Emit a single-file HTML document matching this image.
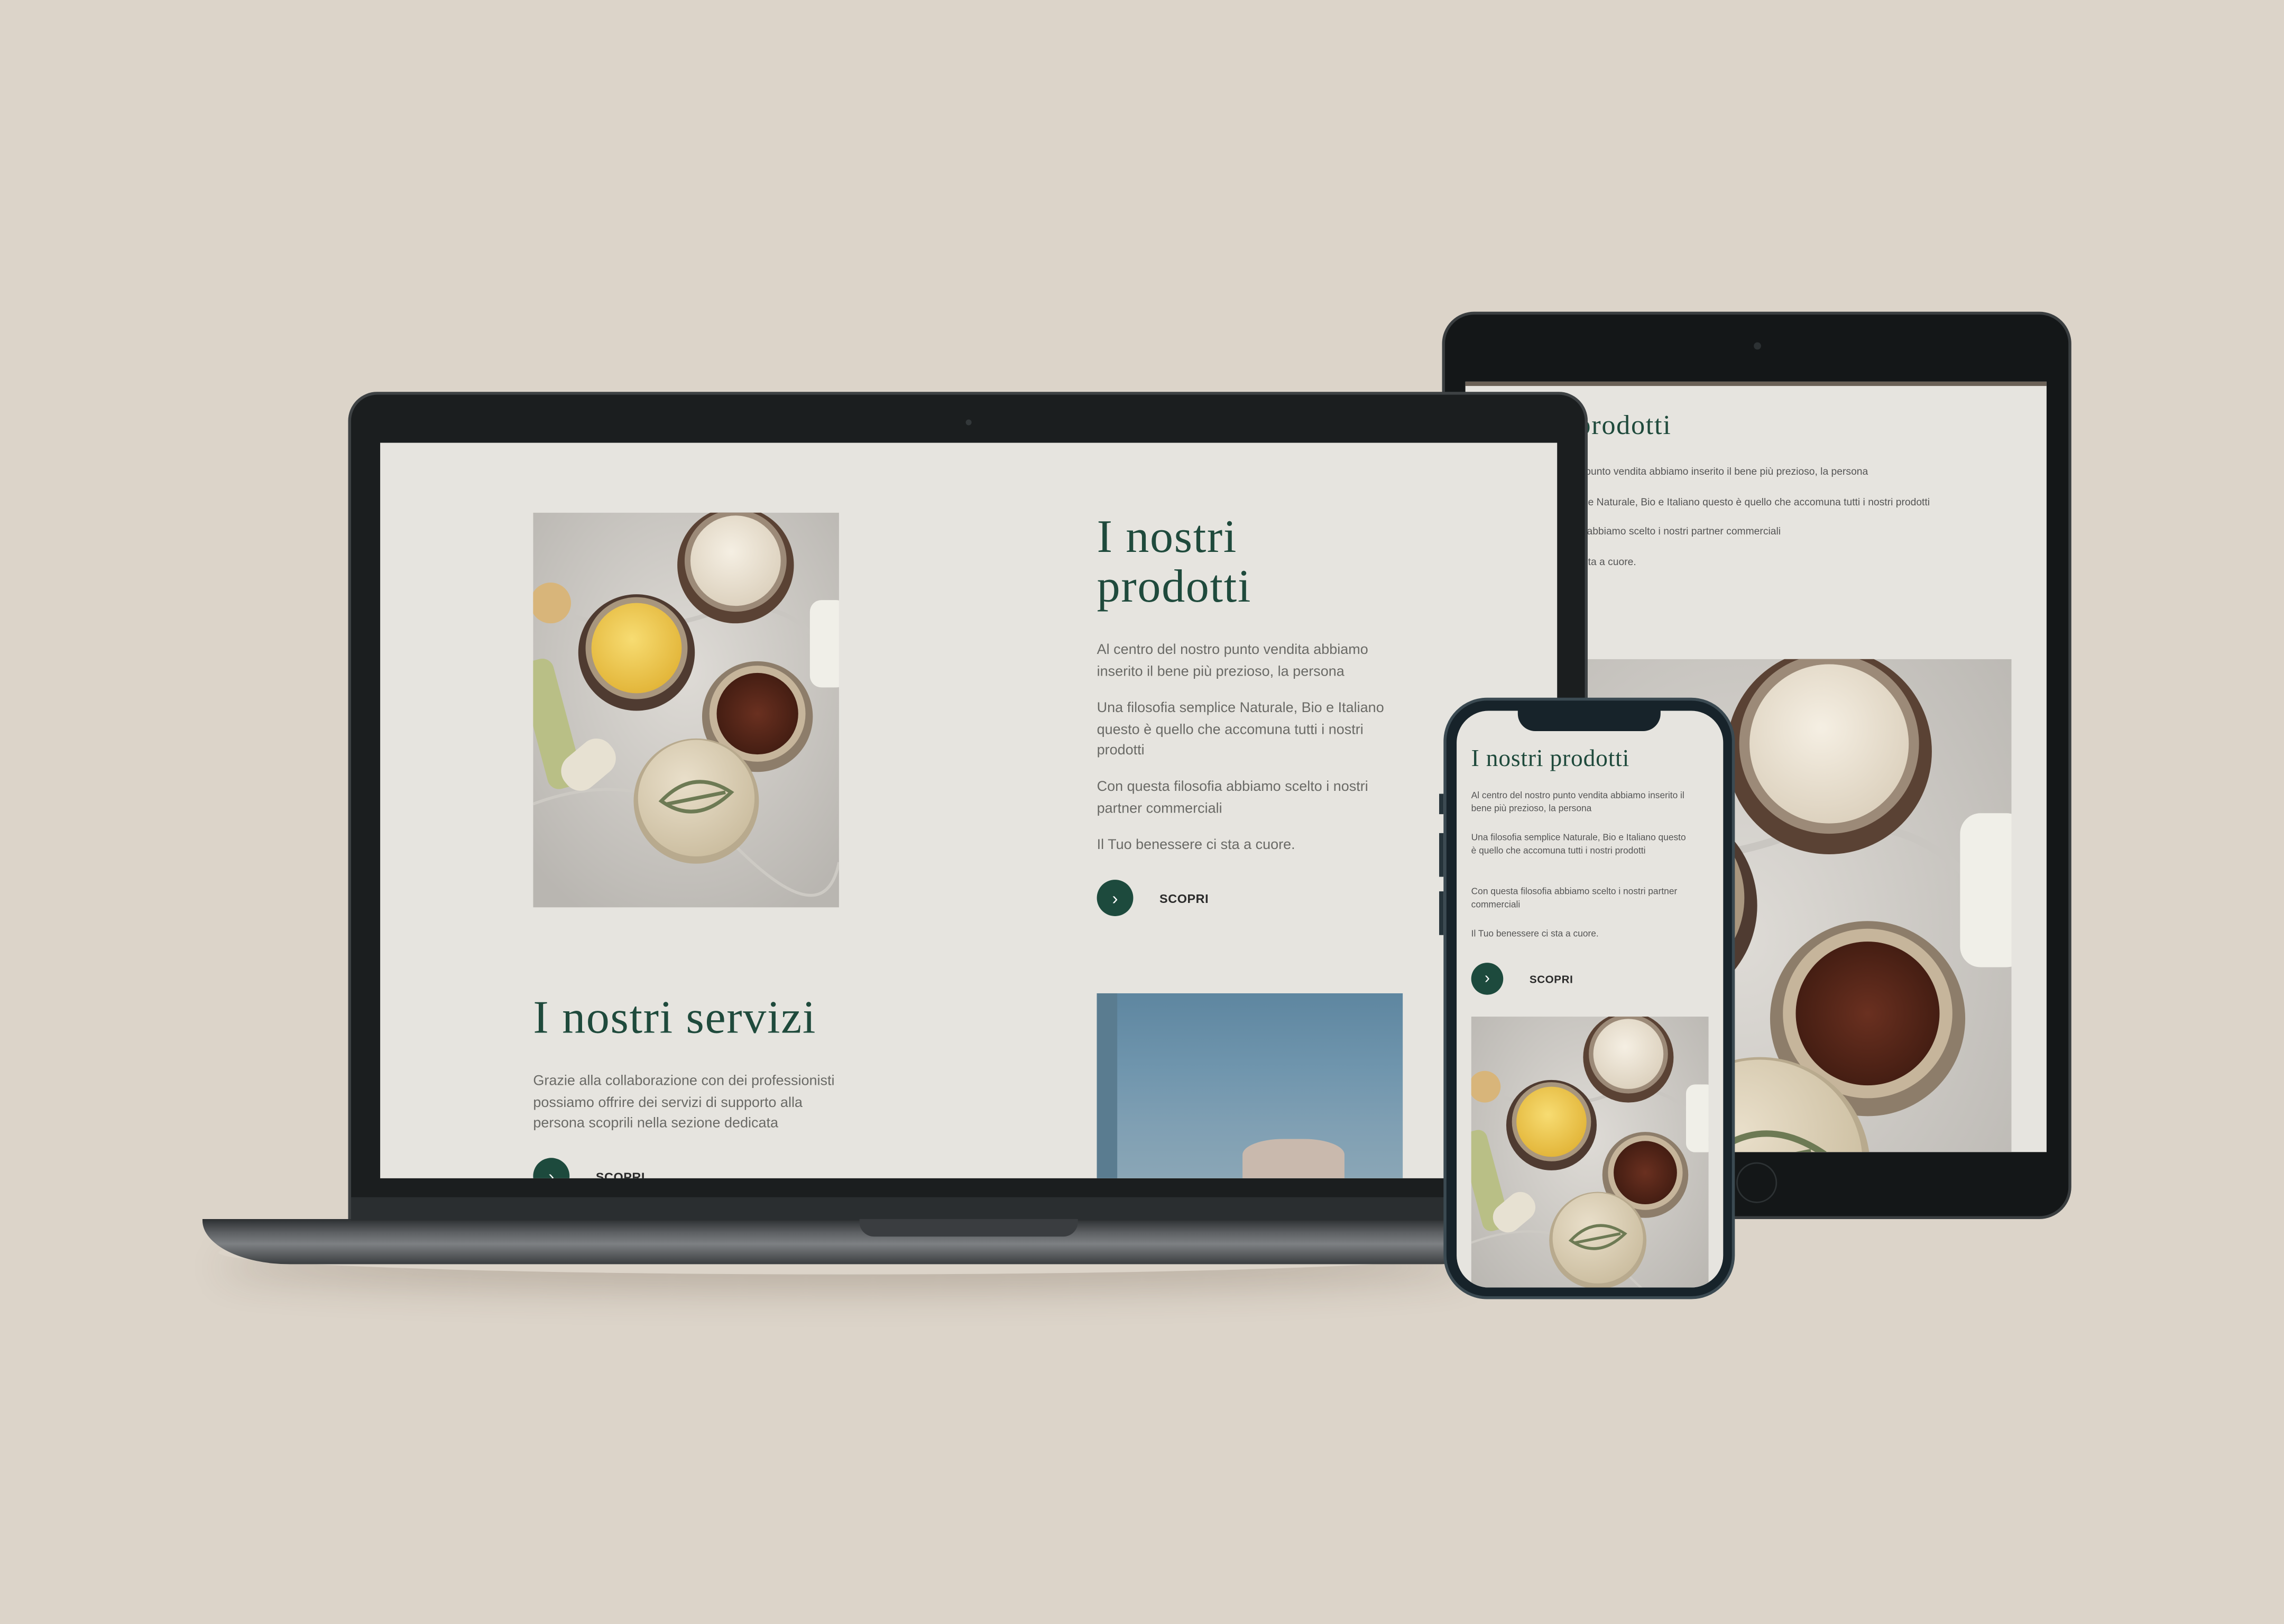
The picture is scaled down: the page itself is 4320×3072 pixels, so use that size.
<!DOCTYPE html>
<html><head><meta charset="utf-8"><style>
*{margin:0;padding:0;box-sizing:border-box}
html,body{width:4320px;height:3072px;overflow:hidden;background:#dcd4c9}
#s{position:absolute;left:0;top:0;width:1568px;height:1115px;transform:scale(2.7551);transform-origin:0 0;background:#dcd4c9;font-family:"Liberation Sans",sans-serif}
.a{position:absolute}
.h{font-family:"Liberation Serif",serif;color:#1f4a3c;font-weight:400;letter-spacing:.6px}
.p{color:#6a6a66;font-size:9.8px;line-height:14.6px}
.btn{position:absolute;border-radius:50%;background:#1d4a3d;color:#fff;display:flex;align-items:center;justify-content:center}
.sc{position:absolute;font-weight:bold;color:#2a2a2a;letter-spacing:.2px}
</style></head><body><div id="s">
<svg width="0" height="0" style="position:absolute">
<defs>
<radialGradient id="mb" cx="50%" cy="40%" r="70%"><stop offset="0" stop-color="#dedbd6"/><stop offset="1" stop-color="#b9b6b1"/></radialGradient>
<radialGradient id="cr" cx="45%" cy="40%" r="60%"><stop offset="0" stop-color="#f5efe3"/><stop offset="1" stop-color="#ddd2bf"/></radialGradient>
<radialGradient id="ye" cx="45%" cy="40%" r="60%"><stop offset="0" stop-color="#f7dc72"/><stop offset="1" stop-color="#e3b63a"/></radialGradient>
<radialGradient id="br" cx="50%" cy="50%" r="60%"><stop offset="0" stop-color="#6a3020"/><stop offset="1" stop-color="#3d1a10"/></radialGradient>
<radialGradient id="ld" cx="40%" cy="35%" r="70%"><stop offset="0" stop-color="#e9dfca"/><stop offset="1" stop-color="#cbbd9f"/></radialGradient>
<symbol id="ph" viewBox="0 0 210 271">
<rect width="210" height="271" fill="url(#mb)"/>
<path d="M0 60 Q60 90 120 70 T210 110" stroke="#c9c6c1" fill="none" stroke-width="3"/>
<path d="M0 200 Q80 170 140 230 T210 240" stroke="#cdcac4" fill="none" stroke-width="2"/>
<rect x="0" y="100" width="24" height="90" rx="8" fill="#b9bf86" transform="rotate(-15 12 145)"/>
<rect x="190" y="60" width="26" height="60" rx="8" fill="#f0efe8"/>
<circle cx="12" cy="62" r="14" fill="#d8b57a"/>
<circle cx="139" cy="36" r="40" fill="#5a4234"/>
<circle cx="139" cy="33" r="35" fill="#9c8a78"/>
<circle cx="139" cy="33" r="31" fill="url(#cr)"/>
<circle cx="71" cy="96" r="40" fill="#4f3b31"/>
<circle cx="71" cy="93" r="35" fill="#a8967e"/>
<circle cx="71" cy="93" r="31" fill="url(#ye)"/>
<circle cx="154" cy="140" r="38" fill="#8d7d6a"/>
<circle cx="154" cy="138" r="33" fill="#c6b59b"/>
<circle cx="154" cy="138" r="28" fill="url(#br)"/>
<rect x="18" y="160" width="40" height="26" rx="12" fill="#e7e1d2" transform="rotate(-40 38 173)"/>
<circle cx="112" cy="198" r="43" fill="#b8aa8e"/>
<circle cx="112" cy="196" r="40" fill="url(#ld)"/>
<path d="M88 198 Q110 175 136 192 Q112 215 88 198 Z M92 200 L132 192" stroke="#6d7a54" stroke-width="2.5" fill="none"/>
</symbol>
</defs></svg>

<!-- tablet -->
<div class="a" style="left:990px;top:214px;width:432px;height:623px;border-radius:22px;background:#141718;border:2px solid #3a3e40"></div>
<div class="a" style="left:1204px;top:235px;width:5px;height:5px;border-radius:50%;background:#2c3133"></div>
<div class="a" style="left:1192px;top:798px;width:28px;height:28px;border-radius:50%;border:1.5px solid #2d3234"></div>
<div class="a" style="left:1006px;top:262px;width:399px;height:529px;background:#e6e4df;overflow:hidden">
 <div class="a" style="left:0;top:0;width:399px;height:3px;background:#6b6157"></div>
 <div class="a h" style="left:12px;top:20px;font-size:19px">I nostri prodotti</div>
 <div class="a" style="left:20px;top:53px;font-size:7px;color:#555;line-height:20.5px;white-space:nowrap">
 Al centro del nostro punto vendita abbiamo inserito il bene più prezioso, la persona<br>
 Una filosofia semplice Naturale, Bio e Italiano questo è quello che accomuna tutti i nostri prodotti<br>
 Con questa filosofia abbiamo scelto i nostri partner commerciali<br>
 Il Tuo benessere ci sta a cuore.</div>
 <svg class="a" style="left:84px;top:180px" width="305" height="349" viewBox="45 -6 173 198" preserveAspectRatio="xMidYMid slice"><use href="#ph" x="0" y="0" width="210" height="271"/></svg>
</div>

<!-- laptop -->
<div class="a" style="left:150px;top:845px;width:860px;height:30px;border-radius:50%;box-shadow:0 10px 25px rgba(80,60,40,.25)"></div>
<div class="a" style="left:239px;top:269px;width:851px;height:570px;border-radius:20px 20px 0 0;background:#1b1e1f;border:2px solid #3e4244;border-bottom:none"></div>
<div class="a" style="left:663px;top:288px;width:4px;height:4px;border-radius:50%;background:#33383a"></div>
<div class="a" style="left:139px;top:837px;width:880px;height:31px;border-radius:0 0 30px 60px/0 0 20px 30px;background:linear-gradient(#2c2f31 0,#5d6063 30%,#7d8083 55%,#3b3e40 100%)"></div>
<div class="a" style="left:241px;top:822px;width:847px;height:16px;background:#2a2e30"></div>
<div class="a" style="left:590px;top:837px;width:150px;height:12px;border-radius:0 0 10px 10px;background:#3a3d40"></div>
<div class="a" style="left:261px;top:304px;width:808px;height:505px;background:#e6e4df;overflow:hidden">
 <svg class="a" style="left:105px;top:48px" width="210" height="271" viewBox="0 0 210 271"><use href="#ph" x="0" y="0" width="210" height="271"/></svg>
 <div class="a h" style="left:492px;top:47px;font-size:32px;line-height:34px">I nostri<br>prodotti</div>
 <div class="a p" style="left:492px;top:136px;width:210px">Al centro del nostro punto vendita abbiamo inserito il bene più prezioso, la persona</div>
 <div class="a p" style="left:492px;top:176px;width:210px">Una filosofia semplice Naturale, Bio e Italiano questo è quello che accomuna tutti i nostri prodotti</div>
 <div class="a p" style="left:492px;top:230px;width:210px">Con questa filosofia abbiamo scelto i nostri partner commerciali</div>
 <div class="a p" style="left:492px;top:270px;width:210px">Il Tuo benessere ci sta a cuore.</div>
 <div class="btn" style="left:492px;top:300px;width:25px;height:25px;font-size:12px">›</div>
 <div class="sc" style="left:535px;top:308px;font-size:8.5px">SCOPRI</div>
 <div class="a h" style="left:105px;top:376px;font-size:32px">I nostri servizi</div>
 <div class="a p" style="left:105px;top:432px;width:220px">Grazie alla collaborazione con dei professionisti possiamo offrire dei servizi di supporto alla persona scoprili nella sezione dedicata</div>
 <div class="btn" style="left:105px;top:491px;width:25px;height:25px;font-size:12px">›</div>
 <div class="sc" style="left:148px;top:499px;font-size:8.5px">SCOPRI</div>
 <div class="a" style="left:492px;top:378px;width:210px;height:127px;background:linear-gradient(180deg,#5e86a0 0,#6f95ad 40%,#7f9fb3 70%,#8aa6b6 100%)">
  <div class="a" style="left:0;top:0;width:14px;height:127px;background:#5a7c90"></div>
  <div class="a" style="left:100px;top:100px;width:70px;height:27px;border-radius:40% 40% 0 0;background:#c9b9ad"></div>
 </div>
</div>

<!-- phone -->
<div class="a" style="left:991px;top:479px;width:200px;height:413px;border-radius:30px;background:#17232a;border:2px solid #3b4a52"></div>
<div class="a" style="left:988px;top:545px;width:3px;height:14px;background:#26343b"></div>
<div class="a" style="left:988px;top:572px;width:3px;height:30px;background:#26343b"></div>
<div class="a" style="left:988px;top:612px;width:3px;height:30px;background:#26343b"></div>
<div class="a" style="left:1000px;top:488px;width:183px;height:396px;border-radius:22px;background:#e6e4df;overflow:hidden">
 <div class="a" style="left:42px;top:0;width:98px;height:14px;border-radius:0 0 12px 12px;background:#17232a"></div>
 <div class="a h" style="left:10px;top:23px;font-size:16.5px;letter-spacing:.3px">I nostri prodotti</div>
 <div class="a" style="left:10px;top:54px;width:150px;font-size:6.3px;line-height:9px;color:#555">Al centro del nostro punto vendita abbiamo inserito il bene più prezioso, la persona</div>
 <div class="a" style="left:10px;top:83px;width:150px;font-size:6.3px;line-height:9px;color:#555">Una filosofia semplice Naturale, Bio e Italiano questo è quello che accomuna tutti i nostri prodotti</div>
 <div class="a" style="left:10px;top:120px;width:150px;font-size:6.3px;line-height:9px;color:#555">Con questa filosofia abbiamo scelto i nostri partner commerciali</div>
 <div class="a" style="left:10px;top:149px;width:150px;font-size:6.3px;line-height:9px;color:#555">Il Tuo benessere ci sta a cuore.</div>
 <div class="btn" style="left:10px;top:173px;width:22px;height:22px;font-size:11px">›</div>
 <div class="sc" style="left:50px;top:180px;font-size:7.5px">SCOPRI</div>
 <svg class="a" style="left:10px;top:210px" width="163" height="186" viewBox="0 0 210 271" preserveAspectRatio="xMidYMin slice"><use href="#ph" x="0" y="0" width="210" height="271"/></svg>
</div>
</div></body></html>
